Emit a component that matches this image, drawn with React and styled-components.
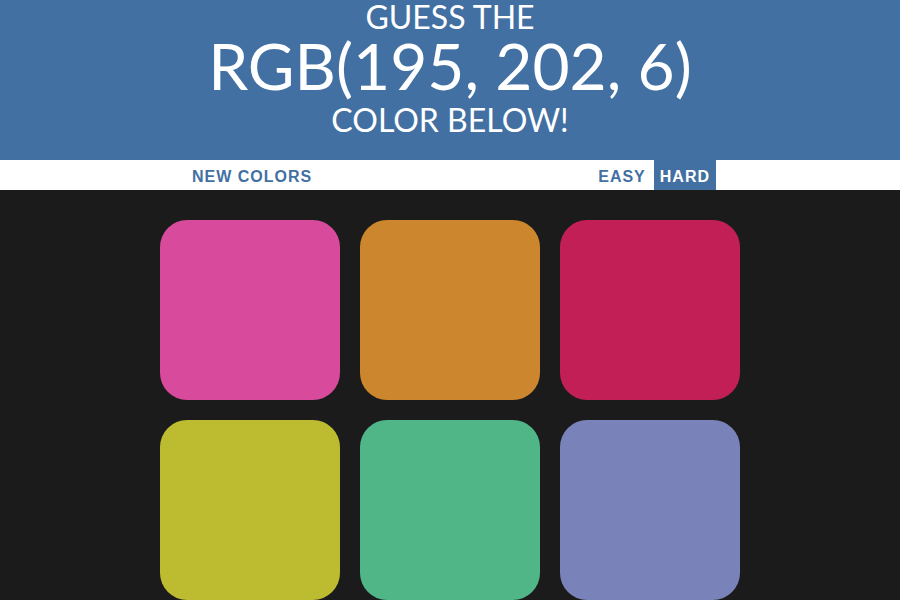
import React, { useState } from 'react';
import styled, { createGlobalStyle, css } from 'styled-components';

const GlobalStyle = createGlobalStyle`
  body {
    margin: 0;
    background: #1b1b1b;
    font-family: "Lato", "Open Sans", sans-serif;
  }
`;

const colors = [
  '#d84a9c',
  '#cc872e',
  '#c31f57',
  '#bdbb30',
  '#50b687',
  '#7983b9'
];

function App() {
  const [mode, setMode] = useState('hard');

  return (
    <>
      <GlobalStyle />
      <Header>
        <Title>
          <Line>Guess the</Line>
          <Big>RGB(195, 202, 6)</Big>
          <Line>Color below!</Line>
        </Title>
      </Header>
      <Stripe>
        <Button>New Colors</Button>
        <Message />
        <Button selected={mode === 'easy'} onClick={() => setMode('easy')}>
          Easy
        </Button>
        <Button selected={mode === 'hard'} onClick={() => setMode('hard')}>
          Hard
        </Button>
      </Stripe>
      <Board>
        {colors.map((color, index) => (
          <Square key={index} style={{ background: color }} />
        ))}
      </Board>
    </>
  );
}

const Header = styled.header`
  background: #4270a2;
  color: #fff;
  height: 160px;
  padding-top: 1px;
  box-sizing: border-box;
  overflow: hidden;
`;
const Title = styled.h1`
  margin: 0;
  font-weight: normal;
  font-size: 32px;
  line-height: 1;
  text-align: center;
  text-transform: uppercase;
`;
const Line = styled.span`
  display: block;
`;
const Big = styled.span`
  display: block;
  margin: 1px 0 6px;
  font-size: 64px;
`;
const Stripe = styled.div`
  display: flex;
  justify-content: center;
  height: 30px;
  background: #fff;
`;
const Message = styled.span`
  width: 272px;
`;
const Button = styled.button`
  border: none;
  background: none;
  height: 100%;
  padding: 3px 6px 0;
  margin-left: 2px;
  font-family: "Liberation Sans", Arial, sans-serif;
  font-size: 16px;
  font-weight: 700;
  letter-spacing: 1px;
  text-transform: uppercase;
  color: #4270a2;
  cursor: pointer;
  outline: none;
  ${props =>
    props.selected &&
    css`
      background: #4270a2;
      color: #fff;
    `}
`;
const Board = styled.div`
  display: grid;
  grid-template-columns: repeat(3, 180px);
  gap: 20px;
  justify-content: center;
  padding-top: 30px;
`;
const Square = styled.div`
  height: 180px;
  border-radius: 15%;
`;

export default App;
